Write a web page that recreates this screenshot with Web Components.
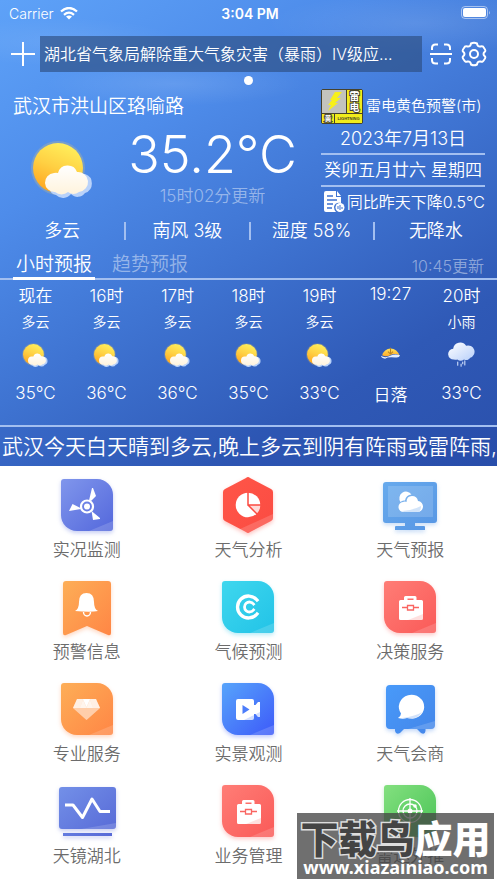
<!DOCTYPE html>
<html lang="zh-CN">
<head>
<meta charset="utf-8">
<meta name="viewport" content="width=device-width, initial-scale=1">
<title>武汉天气</title>
<style>
  body {
    margin: 0;
    background: #fff;
    font-family: Inter, "Noto Sans CJK SC", sans-serif;
    font-weight: 350;
  }
</style>
</head>
<body>
<weather-page>
  <weather-hero slot="hero">
    <status-bar slot="top" carrier="Carrier" time="3:04 PM"></status-bar>
    <notice-bar slot="top">湖北省气象局解除重大气象灾害（暴雨）Ⅳ级应...</notice-bar>
    <current-weather slot="now" temp="35.2°C">
      <span slot="place">武汉市洪山区珞喻路</span>
      <span slot="updated">15时02分更新</span>
      <span slot="alert">雷电黄色预警(市)</span>
      <span slot="date">2023年7月13日</span>
      <span slot="lunar">癸卯五月廿六 星期四</span>
      <span slot="compare">同比昨天下降0.5°C</span>
    </current-weather>
    <metric-row slot="now">
      <span>多云</span>
      <span>南风 3级</span>
      <span>湿度 58%</span>
      <span>无降水</span>
    </metric-row>
    <forecast-tabs slot="hours" updated="10:45更新">
      <hour-item time="现在" sky="多云" icon="cloudy" value="35°C"></hour-item>
      <hour-item time="16时" sky="多云" icon="cloudy" value="36°C"></hour-item>
      <hour-item time="17时" sky="多云" icon="cloudy" value="36°C"></hour-item>
      <hour-item time="18时" sky="多云" icon="cloudy" value="35°C"></hour-item>
      <hour-item time="19时" sky="多云" icon="cloudy" value="33°C"></hour-item>
      <hour-item time="19:27" sky="" icon="sunset" value="日落"></hour-item>
      <hour-item time="20时" sky="小雨" icon="rain" value="33°C"></hour-item>
    </forecast-tabs>
    <span slot="summary">武汉今天白天晴到多云,晚上多云到阴有阵雨或雷阵雨,</span>
  </weather-hero>

  <app-tile icon="fan">实况监测</app-tile>
  <app-tile icon="pie">天气分析</app-tile>
  <app-tile icon="monitor">天气预报</app-tile>
  <app-tile icon="bell">预警信息</app-tile>
  <app-tile icon="climate">气候预测</app-tile>
  <app-tile icon="briefcase">决策服务</app-tile>
  <app-tile icon="diamond">专业服务</app-tile>
  <app-tile icon="video">实景观测</app-tile>
  <app-tile icon="chat">天气会商</app-tile>
  <app-tile icon="pulse">天镜湖北</app-tile>
  <app-tile icon="briefcase">业务管理</app-tile>
  <app-tile icon="radar">雷达外推</app-tile>

  <site-badge slot="badge"></site-badge>
</weather-page>

<script>
// Weather symbols, used by the big display and the hourly strip
const skyIcons = {
  cloudy: `
    <svg viewBox="0 0 64 60">
      <defs>
        <linearGradient id="sun" x1=".7" y1="0" x2=".3" y2="1">
          <stop offset="0" stop-color="#fff05c"/><stop offset=".5" stop-color="#ffd043"/><stop offset="1" stop-color="#ffa51f"/>
        </linearGradient>
        <linearGradient id="cl" x1="0" y1="0" x2="0" y2="1">
          <stop offset="0" stop-color="#fff"/><stop offset="1" stop-color="#fff3dc"/>
        </linearGradient>
      </defs>
      <circle cx="27" cy="30" r="27" fill="#ffd35a" opacity=".22"/>
      <circle cx="27" cy="30" r="25" fill="url(#sun)"/>
      <path d="M25 57a8 8 0 0 1-4-14L54 36a10 10 0 0 1 0 19 9 9 0 0 1-14 1 10 10 0 0 1-15 1Z" fill="#b9d2fa"/>
      <path d="M24 54a9 9 0 0 1-1-19 6 6 0 0 1 4 0 10 10 0 0 1 19-1 10 10 0 0 1 2 20 9 9 0 0 1-11 0 10 10 0 0 1-13 0Z" fill="url(#cl)"/>
    </svg>`,
  sunset: `
    <svg viewBox="0 0 64 60">
      <defs>
        <linearGradient id="set" x1="0" y1="0" x2="0" y2="1">
          <stop offset="0" stop-color="#ffe35a"/><stop offset="1" stop-color="#ffa928"/>
        </linearGradient>
      </defs>
      <path d="M12 32a21 21 0 0 1 41 0Q42 26 32 31 22 37 12 32Z" fill="url(#set)"/>
      <path d="M32 14v14M26 23l6 6 6-6" fill="none" stroke="#b98324" stroke-width="2.5"/>
      <path d="M9 33q10 7 22 0 12-5 24-1-2 7-12 5-18-2-24 3-9-1-10-7Z" fill="#e4edff"/>
    </svg>`,
  rain: `
    <svg viewBox="0 0 64 60">
      <defs>
        <linearGradient id="rc" x1="0" y1="0" x2="1" y2="1">
          <stop offset="0" stop-color="#fff"/><stop offset="1" stop-color="#b7cffa"/>
        </linearGradient>
      </defs>
      <path d="M14 42a13 13 0 0 1-2-26A17 17 0 0 1 43 9 14 14 0 0 1 53 38a11 11 0 0 1-15 4 13 13 0 0 1-16 0 10 10 0 0 1-8 0Z" fill="url(#rc)"/>
      <path d="M23 48v8M35 48v4M40 45v10M31 53v5" stroke="#d8e6ff" stroke-width="2.5" stroke-linecap="round"/>
    </svg>`
};

// Coloured plates behind the menu icons
const leaf = "M9 5H42A16 16 0 0 1 58 21V54a3 3 0 0 1-3 3H22A16 16 0 0 1 6 41V8A3 3 0 0 1 9 5Z";
const plate = (from, to, d = leaf, fold = "M34 57L58 47V54a3 3 0 0 1-3 3Z") => `
  <defs><linearGradient id="g" x1="0" y1="0" x2="1" y2="1">
    <stop offset="0" stop-color="${from}"/><stop offset="1" stop-color="${to}"/>
  </linearGradient></defs>
  <path class="plate" style="--glow: ${to}55" d="${d}" fill="url(#g)"/>
  <path d="${fold}" fill="#fff" opacity=".16"/>`;

const tileIcons = {
  fan: plate("#8096ec", "#5468dc") + `
    <circle cx="32" cy="32.5" r="6" fill="none" stroke="#fff" stroke-width="2.2"/>
    <circle cx="32" cy="32.5" r="3" fill="#fff"/>
    <path d="M34 26.5L37 14H38L41 22 36 27Z M25.5 34L17.5 30 14 37 26 35Z M36.5 37L38 46 45 45V44Z" fill="#fff"/>`,
  pie: plate("#ff5648", "#fb4b42",
      "M30 4Q32 2 34 4L55 15Q57 16 57 18V44Q57 46 55 47L34 58Q32 60 30 58L9 47Q7 46 7 44V18Q7 16 9 15Z",
      "M24 55L57 40V44Q57 46 55 47L34 58Q32 60 30 58Z") + `
    <circle cx="32" cy="31" r="12.3" fill="#fff"/>
    <path d="M32 31H44.3A12.3 12.3 0 0 1 40.7 39.7Z" fill="#fb4b42" opacity=".2"/>
    <path d="M32 18V31H45M32 31L41 40" fill="none" stroke="#fb4b42" stroke-width="1.5"/>`,
  monitor: plate("#67aaed", "#5796e4",
      "M8 8H56a3 3 0 0 1 3 3V46a3 3 0 0 1-3 3H37v3H46a1 1 0 0 1 1 1V56H17V53a1 1 0 0 1 1-1H27V49H8a3 3 0 0 1-3-3V11A3 3 0 0 1 8 8Z",
      "M10 12H55V43H10Z") + `
    <path d="M22.500 28A6 6 0 1 1 33.500 20.500Q28 21 27 26.500 24 26 22.500 28Z" fill="#fff"/>
    <path d="M26 38a5 5 0 0 1-1-10Q27 27 28.500 28 28.500 22 34 22 39 22 40 27A5.500 5.500 0 0 1 39 38Z" fill="#fff"/>
    <path d="M24 37Q36 36 43 32 43 38 39 38H26Z" fill="#69a6eb" opacity=".3"/>`,
  bell: plate("#fdae57", "#ff8645",
      "M11 5H53a3 3 0 0 1 3 3V57Q56 60 53 59L32 50 11 59Q8 60 8 57V8A3 3 0 0 1 11 5Z", "M0 0Z") + `
    <path d="M28.500 36a3.500 4 0 0 0 7 0" fill="none" stroke="#fff" stroke-width="1.4"/>
    <path d="M20 35Q24 33 24 26 24 17 31.500 17 39 17 39 26 39 33 43 35Q36 36.500 20 35Z" fill="#fff"/>`,
  climate: plate("#3fd7ee", "#22c3e7") + `
    <g fill="none" stroke="#fff" stroke-linecap="square">
      <path d="M41 24A11 11 0 1 0 41 38" stroke-width="3.3"/>
      <path d="M37.500 28A5 5 0 1 0 37.500 34" stroke-width="2.8"/>
    </g>`,
  briefcase: plate("#ff7d76", "#fa5a58") + `
    <path d="M26 24V21.500Q26 20 27.500 20H37Q38.500 20 38.500 21.500V24H43.500Q45 24 45 25.500V42.500Q45 44 43.500 44H22.500Q21 44 21 42.500V25.500Q21 24 22.500 24Z M29.500 24H35.500V22.500H29.500Z" fill="#fff" fill-rule="evenodd"/>
    <path d="M24 31.500H29.500M35.500 31.500H41M29.500 29.500H35.500V34H29.500Z" fill="none" stroke="#f96561" stroke-width="1.3"/>
    <path d="M30 44L45 38V44Z" fill="#f96561" opacity=".2"/>`,
  diamond: plate("#fdae57", "#ff8645") + `
    <path d="M22 21H41L45 30 31.500 42 18 30Z" fill="#fff" opacity=".75"/>
    <path d="M22 21H28L25 30H18Z M35 21H41L45 30H38Z" fill="#fff" opacity=".4"/>
    <path d="M28 21L31.500 29 35 21Z" fill="#fff"/>
    <path d="M25 30L28 22 31.500 30Z M31.500 30L35 22 38 30Z" fill="#fff" opacity=".6"/>
    <path d="M18 30H45L31.500 42Z" fill="#ff9850" opacity=".3"/>`,
  video: plate("#57a4fb", "#3d5af9") + `
    <path d="M22 21H36Q38 21 38 23V27L39.500 27 42 24H44V39H42L39.500 36H38V40Q38 42 36 42H22Q20 42 20 40V23Q20 21 22 21Z" fill="#fff"/>
    <path d="M26.500 27L33.500 31.500 26.500 36Z" fill="#4b7dfb"/>
    <path d="M28 42L44 34V39H42L39.500 36 38 37V42Z" fill="#4b7dfb" opacity=".25"/>`,
  chat: plate("#489afa", "#4486e9",
      "M12 7H53a4 4 0 0 1 4 4V47a4 4 0 0 1-4 4H47.500V53Q47 57 43 55L39 51H26L22 55Q18 57 17 53V51H12a4 4 0 0 1-4-4V11A4 4 0 0 1 12 7Z",
      "M30 51L57 43V47a4 4 0 0 1-4 4Z") + `
    <path d="M20 40Q23 38 23 35.500A12.700 12 0 1 1 29 40Q25 41.500 20 40Z" fill="#fff"/>
    <path d="M24 40Q38 38 44 34 38 43 29 40Z" fill="#4a8dea" opacity=".25"/>`,
  pulse: plate("#7390e8", "#5668d6",
      "M7 7H58a3 3 0 0 1 3 3V46a3 3 0 0 1-3 3H7a3 3 0 0 1-3-3V10A3 3 0 0 1 7 7Z M8 53H57V56H8Z",
      "M26 49L61 43V46a3 3 0 0 1-3 3Z") + `
    <path d="M10 25H18L27.500 37.500 37 19 45 31.500H55" fill="none" stroke="#fff" stroke-width="3" stroke-linejoin="round"/>`,
  radar: plate("#83e07f", "#48c355") + `
    <g fill="none" stroke="#fff" stroke-width="1.3">
      <circle cx="32" cy="31" r="11.500"/><circle cx="32" cy="31" r="7"/>
      <path d="M32 18V44M19 31H45"/>
    </g>
    <circle cx="32" cy="31" r="2.500" fill="#fff"/><circle cx="37" cy="26" r="1.800" fill="#fff"/>`
};

class BaseElement extends HTMLElement {
  constructor() {
    super();
    this.attachShadow({ mode: "open" });
  }
  attr(name) { return this.getAttribute(name) || ""; }
  connectedCallback() {
    this.shadowRoot.innerHTML = this.render();
  }
}

customElements.define("weather-page", class extends BaseElement {
  render() {
    return `
      <style>
        :host { display: block; position: relative; min-height: 100vh; }
        nav {
          display: grid;
          grid-template-columns: repeat(3, 1fr);
          row-gap: 14px;
          padding: 8px 6px 14px;
        }
      </style>
      <slot name="hero"></slot>
      <nav><slot></slot></nav>
      <slot name="badge"></slot>`;
  }
});

customElements.define("weather-hero", class extends BaseElement {
  render() {
    return `
      <style>
        :host {
          display: block;
          color: #fff;
          background:
            radial-gradient(ellipse 130px 22px at 35% 18%, #ffffff1c, #fff0),
            radial-gradient(ellipse 150px 30px at 84% 5%, #ffffff1a, #fff0),
            radial-gradient(ellipse 120px 24px at 12% 9%, #ffffff14, #fff0),
            linear-gradient(148deg, #5ea2f8 0%, #4e8cea 28%, #3f74d2 52%, #2f59b6 78%, #2a50ac 100%);
        }
        footer {
          border-top: 2px solid #a3bff0;
          padding-left: 2px;
          font-size: 21px;
          line-height: 39px;
          white-space: nowrap;
          background: #2446a026;
        }
      </style>
      <slot name="top"></slot>
      <slot name="now"></slot>
      <slot name="hours"></slot>
      <footer><slot name="summary"></slot></footer>`;
  }
});

customElements.define("status-bar", class extends BaseElement {
  render() {
    return `
      <style>
        :host {
          display: grid;
          grid-template-columns: 1fr auto 1fr;
          align-items: center;
          height: 26px;
          padding: 0 6px 0 9px;
          font-size: 14px;
        }
        div { display: flex; align-items: center; gap: 6px; }
        b { font-weight: 600; }
        .right { justify-content: flex-end; }
      </style>
      <div>${this.attr("carrier")}
        <svg width="18" height="13" viewBox="0 0 18 13" fill="none" stroke="#fff" stroke-width="2.3">
          <path d="M1 4.500Q9-2.500 17 4.500M4 7.800Q9 3.500 14 7.800"/>
          <path d="M6 9.500Q9 7.500 12 9.500L9 12.500Z" fill="#fff" stroke="none"/>
        </svg>
      </div>
      <b>${this.attr("time")}</b>
      <div class="right">
        <svg width="30" height="14" viewBox="0 0 30 14">
          <rect x=".5" y=".5" width="26" height="12" rx="3.5" fill="none" stroke="#fff" opacity=".5"/>
          <rect x="2" y="2" width="23" height="9" rx="2" fill="#fff"/>
          <path d="M28 4.500q1.500 2 0 4Z" fill="#fff" opacity=".6"/>
        </svg>
      </div>`;
  }
});

customElements.define("notice-bar", class extends BaseElement {
  render() {
    return `
      <style>
        :host { display: block; padding: 10px 10px 0; }
        .bar { display: flex; align-items: center; }
        button {
          display: flex;
          padding: 0;
          border: 0;
          background: none;
          color: inherit;
        }
        a {
          flex: 1;
          min-width: 0;
          margin: 0 7px 0 4px;
          padding-left: 4px;
          overflow: hidden;
          white-space: nowrap;
          font-size: 16px;
          line-height: 36px;
          color: #fff;
          text-decoration: none;
          background: #2d4d80a6;
        }
        .tools { display: flex; gap: 8px; }
        .dot { height: 16px; display: grid; place-items: center; }
        .dot i { width: 9px; height: 9px; border-radius: 50%; background: #fff; }
        svg { fill: none; stroke: #fff; stroke-width: 2; }
      </style>
      <div class="bar">
        <button aria-label="添加城市">
          <svg width="26" height="26" viewBox="0 0 26 26"><path d="M13 1V25M1 13H25"/></svg>
        </button>
        <a href="#notice"><slot></slot></a>
        <div class="tools">
          <button aria-label="扫一扫">
            <svg width="24" height="26" viewBox="0 0 24 26">
              <path d="M1 13H23M3 9V7Q3 3.500 6.500 3.500H9M15 3.500H17.500Q21 3.500 21 7V9M3 17V19Q3 22.500 6.500 22.500H9M15 22.500H17.500Q21 22.500 21 19V17"/>
            </svg>
          </button>
          <button aria-label="设置">
            <svg width="26" height="26" viewBox="0 0 26 26" stroke-linejoin="round">
              <path d="M10 2.500Q13 1 16 2.500Q16.500 6 19.500 5.500Q22 4.500 23 7Q25 9.500 24 10.500Q21 13 24 15.500Q25 16.500 23 19Q22 21.500 19.500 20.500Q16.500 20 16 23.500Q13 25 10 23.500Q9.500 20 6.500 20.500Q4 21.500 3 19Q1 16.500 2 15.500Q5 13 2 10.500Q1 9.500 3 7Q4 4.500 6.500 5.500Q9.500 6 10 2.500Z"/>
              <circle cx="13" cy="13" r="4"/>
            </svg>
          </button>
        </div>
      </div>
      <div class="dot"><i></i></div>`;
  }
});

customElements.define("current-weather", class extends BaseElement {
  render() {
    return `
      <style>
        :host {
          display: grid;
          grid-template-columns: 1fr 164px;
          padding-right: 12px;
          white-space: nowrap;
        }
        .place { padding-left: 13px; font-size: 19px; line-height: 38px; }
        .now { display: grid; grid-template-columns: 104px 1fr; }
        .sun { padding: 12px 0 0 31px; }
        .sun svg { display: block; width: 64px; height: 60px; }
        .read { text-align: center; }
        .temp { font-size: 52px; font-weight: 300; line-height: 58px; }
        .updated { font-size: 17px; line-height: 24px; color: #ffffff73; }
        .facts { text-align: center; font-size: 17px; line-height: 30px; }
        .alert, .compare { display: flex; align-items: center; }
        .alert { height: 36px; gap: 3px; font-size: 15px; }
        .date { font-size: 18px; line-height: 29px; }
        .lunar { border: solid #a3bff0; border-width: 2px 0; }
        .compare { justify-content: flex-end; gap: 2px; font-size: 16px; }
        .sign {
          flex: none;
          display: grid;
          grid-template: 23px 9px / 12px 11px 15px;
          gap: 1px;
          border: 1px solid #46422c;
          border-radius: 2px;
          background: #46422c;
        }
        .sign > * { background: #f1ec1b; }
        .bolt { grid-column: 1 / 3; background: #c3c3bd; }
        .sign b {
          display: grid;
          justify-items: center;
          align-content: center;
          font: 700 10px/11px "Noto Sans CJK SC", sans-serif;
          color: #fff;
          -webkit-text-stroke: 2px #46422c;
          paint-order: stroke fill;
        }
        .sign .mini { font-size: 7px; line-height: 9px; }
        .sign .en {
          grid-column: 2 / 4;
          font: 700 4px/9px "Liberation Sans", sans-serif;
          color: #46422c;
          -webkit-text-stroke: 0;
        }
      </style>
      <div>
        <div class="place"><slot name="place"></slot></div>
        <div class="now">
          <div class="sun">${skyIcons.cloudy}</div>
          <div class="read">
            <div class="temp">${this.attr("temp")}</div>
            <div class="updated"><slot name="updated"></slot></div>
          </div>
        </div>
      </div>
      <div class="facts">
        <div class="alert">
          <div class="sign">
            <svg class="bolt" width="24" height="23" viewBox="0 0 24 23">
              <path d="M13 2H20L15 8H19L13 13H16L6 21 9 15H6L10 10H8Z" fill="#f7f01a"/>
            </svg>
            <b><span>雷</span><span>电</span></b>
            <b class="mini">黄</b>
            <b class="en">LIGHTNING</b>
          </div>
          <slot name="alert"></slot>
        </div>
        <div class="date"><slot name="date"></slot></div>
        <div class="lunar"><slot name="lunar"></slot></div>
        <div class="compare">
          <svg width="21" height="22" viewBox="0 0 21 22">
            <path d="M2 0H12V6H17V12Q11 11 10 16 10 19 12 21H2Q0 21 0 19V2Q0 0 2 0Z M13 0L17 5H13Z" fill="#fff"/>
            <path d="M3 5H9M3 9H13M3 13H9M3 17H8" stroke="#3d70cf" stroke-width="1.4"/>
            <circle cx="16" cy="16.5" r="4.5" fill="#fff"/>
            <path d="M14 15V18M16 14V19M18 16V18" stroke="#3d70cf"/>
          </svg>
          <slot name="compare"></slot>
        </div>
      </div>`;
  }
});

customElements.define("metric-row", class extends BaseElement {
  render() {
    return `
      <style>
        :host {
          display: grid;
          grid-template-columns: repeat(4, 1fr);
          align-items: center;
          height: 28px;
          font-size: 18px;
          text-align: center;
        }
        ::slotted(span) { line-height: 18px; }
        ::slotted(span:not(:first-child)) { border-left: 2px solid #a3bff0; }
      </style>
      <slot></slot>`;
  }
});

customElements.define("forecast-tabs", class extends BaseElement {
  render() {
    return `
      <style>
        :host { display: block; }
        header {
          display: flex;
          align-items: flex-end;
          gap: 14px;
          height: 33px;
          padding: 0 13px;
          border-bottom: 2px solid #a3bff0;
        }
        button {
          margin-bottom: -2px;
          padding: 0 3px;
          border: 0;
          border-bottom: 3px solid transparent;
          background: none;
          font: inherit;
          font-size: 19px;
          line-height: 24px;
          color: #ffffff73;
        }
        button[aria-selected="true"] { color: #fff; border-bottom-color: #fff; }
        time { margin-left: auto; font-size: 16px; line-height: 24px; color: #ffffff73; }
        .hours { display: grid; grid-template-columns: repeat(7, 1fr); padding-bottom: 13px; }
      </style>
      <header role="tablist">
        <button role="tab" aria-selected="true">小时预报</button>
        <button role="tab" aria-selected="false">趋势预报</button>
        <time>${this.attr("updated")}</time>
      </header>
      <div class="hours"><slot></slot></div>`;
  }
});

customElements.define("hour-item", class extends BaseElement {
  render() {
    return `
      <style>
        :host {
          display: grid;
          grid-template-rows: 28px 26px 40px 38px;
          place-items: center;
          font-size: 17px;
        }
        small { font-size: 14px; }
        svg { display: block; width: 27px; height: 25px; }
      </style>
      <span>${this.attr("time")}</span>
      <small>${this.attr("sky")}</small>
      ${skyIcons[this.attr("icon")]}
      <span>${this.attr("value")}</span>`;
  }
});

customElements.define("app-tile", class extends BaseElement {
  render() {
    return `
      <style>
        :host { display: block; }
        a {
          display: flex;
          flex-direction: column;
          align-items: center;
          font-size: 17px;
          line-height: 24px;
          color: #6c6c6c;
          text-decoration: none;
        }
        svg { display: block; overflow: visible; }
        .plate { filter: drop-shadow(0 2px 2px var(--glow)); }
      </style>
      <a href="#${this.attr("icon")}">
        <svg width="64" height="64" viewBox="0 0 64 64">${tileIcons[this.attr("icon")]}</svg>
        <slot></slot>
      </a>`;
  }
});

// Download site badge, floats over the lower right corner
customElements.define("site-badge", class extends BaseElement {
  render() {
    return `
      <style>
        :host {
          position: absolute;
          right: 3px;
          bottom: 4px;
          width: 197px;
          height: 66px;
          background: #444444c4;
          color: #fff;
          text-align: center;
          white-space: nowrap;
        }
        strong {
          display: block;
          font: 900 38px/44px "Noto Sans CJK SC", sans-serif;
          padding-top: 2px;
        }
        em {
          font-style: normal;
          color: #444;
          -webkit-text-stroke: 3px #ddd;
          paint-order: stroke fill;
        }
        span { display: block; font: 700 18px/16px "Noto Sans", sans-serif; }
      </style>
      <strong><em>下载鸟</em>应用</strong>
      <span>www.xiazainiao.com</span>`;
  }
});
</script>
</body>
</html>
